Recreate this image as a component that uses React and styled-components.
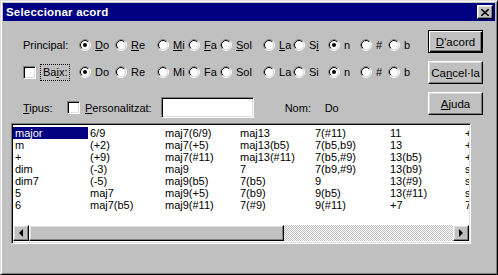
import React from "react";
import styled, { createGlobalStyle } from "styled-components";

const FACE = "#c0c0c0";
const SHADOW = "#808080";
const LIGHT = "#dfdfdf";
const NAVY = "#000080";

const GlobalStyle = createGlobalStyle`
  html, body { margin: 0; padding: 0; background: ${FACE}; }
  body {
    font-family: "Liberation Sans", Arial, sans-serif;
    font-size: 11px;
    color: #000;
    -webkit-font-smoothing: none;
  }
  * { box-sizing: border-box; }
`;

const Window = styled.div`
  width: 498px;
  height: 275px;
  background: ${FACE};
  border: 1px solid;
  border-color: ${LIGHT} #000 #000 ${LIGHT};
  box-shadow: inset 1px 1px #fff, inset -1px -1px ${SHADOW};
  padding: 2px;
  display: flex;
  flex-direction: column;
`;

const TitleBar = styled.div`
  height: 18px;
  background: ${NAVY};
  color: #fff;
  display: flex;
  align-items: center;
  justify-content: space-between;
  padding: 0 2px 0 3px;
`;

const TitleText = styled.span`
  font-weight: bold;
  font-size: 11.5px;
  letter-spacing: 0.2px;
`;

const Raised = styled.div`
  background: ${FACE};
  border: 1px solid;
  border-color: #fff #000 #000 #fff;
  box-shadow: inset -1px -1px ${SHADOW}, inset 1px 1px ${LIGHT};
`;

const CloseBtn = styled(Raised)`
  width: 16px;
  height: 14px;
  display: grid;
  place-items: center;
`;

const Client = styled.div`
  flex: 1;
  display: flex;
  flex-direction: column;
`;

const Top = styled.div`
  display: flex;
  padding-right: 12px;
`;

const Left = styled.div`
  flex: 1;
  display: flex;
  flex-direction: column;
  padding-left: 20px;
  padding-top: 16px;
`;

const Row = styled.div`
  display: flex;
  align-items: center;
  height: ${p => p.$h || 16}px;
  margin-top: ${p => p.$mt || 0}px;
`;

const LabelCell = styled.div`
  width: 56px;
  display: flex;
  align-items: center;
  gap: 5px;
`;

const Focus = styled.span`
  outline: 1px dotted #000;
  padding: 1px 2px;
  line-height: 13px;
`;

const U = styled.span`
  text-decoration: underline;
  text-underline-offset: 1px;
`;

const RadioItem = styled.label`
  width: ${p => p.$w}px;
  display: flex;
  align-items: center;
  gap: 4px;
  flex: none;
`;

const CheckBox = styled.span`
  width: 13px;
  height: 13px;
  background: #fff;
  border: 1px solid;
  border-color: ${SHADOW} #fff #fff ${SHADOW};
  box-shadow: inset 1px 1px #000, inset -1px -1px ${LIGHT};
  flex: none;
`;

const Sunken = styled.div`
  background: #fff;
  border: 1px solid;
  border-color: ${SHADOW} #fff #fff ${SHADOW};
  box-shadow: inset 1px 1px #000, inset -1px -1px ${LIGHT};
`;

const TextBox = styled(Sunken)`
  width: 93px;
  height: 21px;
  margin-left: 9px;
`;

const TipusLabel = styled.span`
  width: 44px;
`;

const PersLabel = styled.span`
  margin-left: 5px;
`;

const NomLabel = styled.span`
  margin-left: 31px;
  width: 40px;
`;

const Buttons = styled.div`
  display: flex;
  flex-direction: column;
  gap: 8px;
  padding-top: 9px;
`;

const Button = styled.div`
  width: 55px;
  height: 23px;
  display: grid;
  place-items: center;
  background: ${FACE};
  border: 1px solid;
  border-color: ${p => (p.$default ? "#000" : "#fff #000 #000 #fff")};
  box-shadow: ${p =>
    p.$default
      ? `inset 1px 1px #fff, inset -1px -1px #000, inset -2px -2px ${SHADOW}`
      : `inset -1px -1px ${SHADOW}, inset 1px 1px ${LIGHT}`};
  font-size: 11.5px;
`;

const ListBox = styled(Sunken)`
  margin: 5px 0 0 8px;
  width: 460px;
  height: 121px;
  padding: 1px;
  display: flex;
  flex-direction: column;
`;

const Items = styled.div`
  flex: 1;
  overflow: hidden;
  display: grid;
  grid-template-rows: repeat(7, 12px);
  grid-auto-flow: column;
  grid-auto-columns: 75px;
  padding-top: 2px;
  align-content: start;
`;

const Item = styled.div`
  padding-left: 2px;
  line-height: 12px;
  white-space: nowrap;
  overflow: hidden;
  background: ${p => (p.$sel ? NAVY : "transparent")};
  color: ${p => (p.$sel ? "#fff" : "#000")};
`;

const ScrollBar = styled.div`
  height: 16px;
  display: flex;
  margin-bottom: 1px;
`;

const ArrowBtn = styled(Raised)`
  width: 16px;
  height: 16px;
  display: grid;
  place-items: center;
  flex: none;
`;

const Thumb = styled(Raised)`
  width: 255px;
  height: 16px;
  flex: none;
`;

const Track = styled.div`
  flex: 1;
  background: repeating-conic-gradient(${FACE} 0% 25%, #fff 0% 50%) 0 0 / 2px 2px;
`;

function Radio({ checked }) {
  return (
    <svg width="12" height="12" viewBox="0 0 12 12" style={{ flex: "none" }}>
      <circle cx="6" cy="6" r="5.5" fill="none" stroke="#fff" />
      <path d="M2.1 9.9 A5.5 5.5 0 0 1 9.9 2.1" fill="none" stroke={SHADOW} />
      <circle cx="6" cy="6" r="4.5" fill="#fff" stroke={LIGHT} />
      <path d="M2.8 9.2 A4.5 4.5 0 0 1 9.2 2.8" fill="none" stroke="#000" />
      {checked && <circle cx="6" cy="6" r="2" fill="#000" />}
    </svg>
  );
}

const NOTES = [
  { w: 36, a: "D", r: "o" },
  { w: 42, a: "R", r: "e" },
  { w: 31, a: "M", r: "i" },
  { w: 32, a: "F", r: "a" },
  { w: 43, a: "S", r: "ol" },
  { w: 30, a: "L", r: "a" },
  { w: 35, p: "S", a: "i", r: "" },
  { w: 32, r: "n", on: true },
  { w: 28, r: "#" },
  { w: 24, r: "b" },
];

function RadioRow({ accel }) {
  return NOTES.map((n, i) => (
    <RadioItem key={i} $w={n.w}>
      <Radio checked={i === 0 || n.on} />
      <span>
        {n.p}
        {n.a && (accel ? <U>{n.a}</U> : n.a)}
        {n.r}
      </span>
    </RadioItem>
  ));
}

const CHORDS = [
  "major", "m", "+", "dim", "dim7", "5", "6",
  "6/9", "(+2)", "(+9)", "(-3)", "(-5)", "maj7", "maj7(b5)",
  "maj7(6/9)", "maj7(+5)", "maj7(#11)", "maj9", "maj9(b5)", "maj9(+5)", "maj9(#11)",
  "maj13", "maj13(b5)", "maj13(#11)", "7", "7(b5)", "7(b9)", "7(#9)",
  "7(#11)", "7(b5,b9)", "7(b5,#9)", "7(b9,#9)", "9", "9(b5)", "9(#11)",
  "11", "13", "13(b5)", "13(b9)", "13(#9)", "13(#11)", "+7",
  "+7(b9)", "+7(#9)", "+9", "sus4", "sus2", "sus9", "7sus4",
];

function Arrow({ dir }) {
  const pts = dir === "left" ? "5,0 5,8 1,4" : "1,0 1,8 5,4";
  return (
    <svg width="6" height="8" viewBox="0 0 6 8">
      <polygon points={pts} fill="#000" />
    </svg>
  );
}

export default function App() {
  return (
    <>
      <GlobalStyle />
      <Window>
        <TitleBar>
          <TitleText>Seleccionar acord</TitleText>
          <CloseBtn>
            <svg width="8" height="7" viewBox="0 0 8 7">
              <path d="M0 0 L8 7 M8 0 L0 7" stroke="#000" strokeWidth="1.6" />
            </svg>
          </CloseBtn>
        </TitleBar>
        <Client>
          <Top>
            <Left>
              <Row>
                <LabelCell>Principal:</LabelCell>
                <RadioRow accel />
              </Row>
              <Row $mt={11}>
                <LabelCell>
                  <CheckBox />
                  <Focus>
                    Ba<U>i</U>x:
                  </Focus>
                </LabelCell>
                <RadioRow />
              </Row>
              <Row $h={21} $mt={17}>
                <TipusLabel>
                  <U>T</U>ipus:
                </TipusLabel>
                <CheckBox />
                <PersLabel>
                  <U>P</U>ersonalitzat:
                </PersLabel>
                <TextBox />
                <NomLabel>Nom:</NomLabel>
                <span>Do</span>
              </Row>
            </Left>
            <Buttons>
              <Button $default>
                <span>
                  <U>D</U>'acord
                </span>
              </Button>
              <Button>
                <span>
                  Ca<U>n</U>cel·la
                </span>
              </Button>
              <Button>
                <span>
                  <U>A</U>juda
                </span>
              </Button>
            </Buttons>
          </Top>
          <ListBox>
            <Items>
              {CHORDS.map((c, i) => (
                <Item key={i} $sel={i === 0}>
                  {c}
                </Item>
              ))}
            </Items>
            <ScrollBar>
              <ArrowBtn>
                <Arrow dir="left" />
              </ArrowBtn>
              <Thumb />
              <Track />
              <ArrowBtn>
                <Arrow dir="right" />
              </ArrowBtn>
            </ScrollBar>
          </ListBox>
        </Client>
      </Window>
    </>
  );
}
